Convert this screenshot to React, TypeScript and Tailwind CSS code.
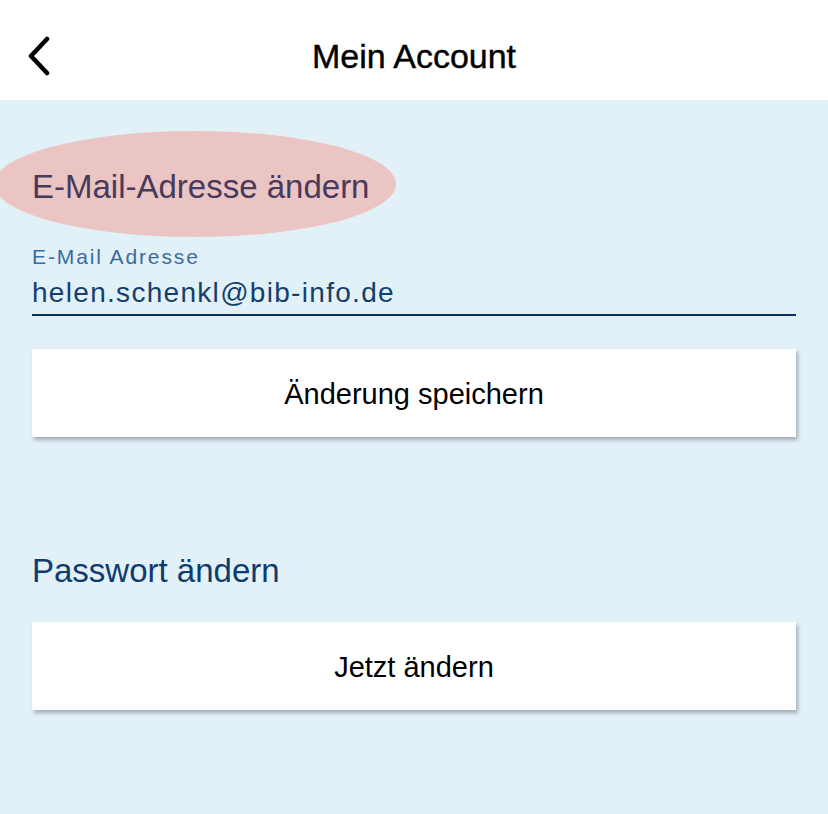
import React from 'react';

function BackChevron() {
  return (
    <svg className="w-[28px] h-[40px]" viewBox="0 0 28 40" fill="none">
      <path
        d="M22 3L6 20l16 17"
        stroke="#000"
        strokeWidth={4.5}
        strokeLinecap="round"
        strokeLinejoin="round"
      />
    </svg>
  );
}

function ActionButton({ label }: { label: string }) {
  return (
    <button
      type="button"
      className="w-full h-[88px] pt-[4px] bg-white flex items-center justify-center text-[29px] text-black shadow-[2px_3px_4px_rgba(0,0,0,0.28)]"
    >
      {label}
    </button>
  );
}

export default function App() {
  return (
    <div
      className="w-[828px] h-[814px] flex flex-col bg-[#e2f0f7] overflow-hidden"
      style={{ fontFamily: '"Liberation Sans", Arial, sans-serif' }}
    >
      <header className="relative h-[100px] bg-white flex items-center justify-center shrink-0">
        <div className="absolute left-[25px] top-[36px]">
          <BackChevron />
        </div>
        <h1 className="text-[34px] leading-[40px] text-black [-webkit-text-stroke:0.4px_#000] mt-[12px]">
          Mein Account
        </h1>
      </header>

      <main className="relative flex-1 px-8">
        <div className="absolute left-[-6px] top-[31px] w-[402px] h-[106px] rounded-[50%] bg-[#ebc4c4]" />

        <h2 className="relative mt-[68px] text-[33px] leading-[38px] text-[#473a5c]">
          E-Mail-Adresse ändern
        </h2>

        <div className="mt-[39px]">
          <div className="text-[21px] leading-[24px] tracking-[1.9px] text-[#3a6c9f]">
            E-Mail Adresse
          </div>
          <div className="mt-[7px] pb-[4px] border-b-2 border-[#0b305f] text-[28px] leading-[34px] tracking-[1.3px] text-[#123f6f]">
            helen.schenkl@bib-info.de
          </div>
        </div>

        <div className="mt-[33px]">
          <ActionButton label="Änderung speichern" />
        </div>

        <h2 className="mt-[115px] text-[33px] leading-[38px] text-[#0e3c6d]">
          Passwort ändern
        </h2>

        <div className="mt-[32px]">
          <ActionButton label="Jetzt ändern" />
        </div>
      </main>
    </div>
  );
}
